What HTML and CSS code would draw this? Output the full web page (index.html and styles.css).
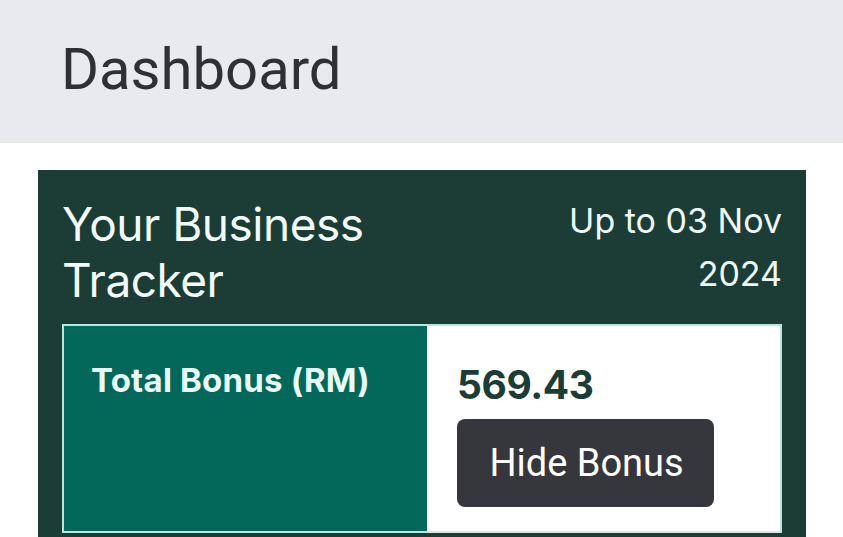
FILE: index.html
```html
<!DOCTYPE html>
<html>
<head>
<meta charset="utf-8">
<link rel="stylesheet" href="styles.css">
</head>
<body>
<header class="topbar">
  <h1 class="page-title">Dashboard</h1>
</header>
<main class="content">
  <section class="card">
    <div class="card-head">
      <h2 class="card-title">Your Business<br>Tracker</h2>
      <div class="card-date">Up to 03 Nov<br>2024</div>
    </div>
    <div class="table">
      <div class="cell-label">Total Bonus (RM)</div>
      <div class="cell-value">
        <div class="amount">569.43</div>
        <button class="btn">Hide Bonus</button>
      </div>
    </div>
  </section>
</main>
</body>
</html>
```

FILE: styles.css
```css
html, body {
  margin: 0;
  padding: 0;
  background: #ffffff;
  overflow: hidden;
}
body {
  font-family: "Inter", "Roboto", sans-serif;
  width: 843px;
  height: 537px;
}
.topbar {
  background: #e9eaef;
  height: 143px;
  box-sizing: border-box;
  padding: 34px 0 0 61px;
}
.page-title {
  margin: 0;
  font-family: "Roboto", sans-serif;
  font-weight: 400;
  font-size: 58px;
  line-height: 70px;
  color: #2f3035;
}
.content {
  padding: 27px 37px 0 38px;
}
.card {
  background: #1b3d36;
  padding: 26px 24px 0 24px;
  height: 367px;
  box-sizing: border-box;
}
.card-head {
  display: flex;
  justify-content: space-between;
  align-items: flex-start;
  height: 128px;
}
.card-title {
  margin: 0;
  font-weight: 400;
  font-size: 46px;
  line-height: 56px;
  color: #f2fbf9;
  letter-spacing: -0.5px;
}
.card-date {
  text-align: right;
  font-size: 34px;
  line-height: 53px;
  color: #eef9f7;
  margin-top: -2px;
}
.table {
  display: grid;
  grid-template-columns: 363px 1fr;
  grid-template-rows: 207px;
  border: 2px solid #b9e7df;
  border-bottom: none;
}
.cell-label {
  background: #03685a;
  color: #e9fbf8;
  font-weight: 700;
  font-size: 33px;
  letter-spacing: 0.2px;
  padding: 34px 0 0 27px;
  border-bottom: 2px solid #b9e7df;
}
.cell-value {
  background: #ffffff;
  padding: 35px 0 0 30px;
  border-bottom: 2px solid #dfe3e3;
}
.amount {
  font-weight: 700;
  font-size: 39px;
  line-height: 48px;
  letter-spacing: -0.4px;
  color: #1b3d36;
}
.btn {
  margin-top: 10px;
  width: 257px;
  height: 88px;
  border: none;
  border-radius: 8px;
  background: #35373d;
  color: #ffffff;
  font-family: "Roboto", sans-serif;
  font-size: 38px;
  padding: 0 0 0 2px;
}
```
